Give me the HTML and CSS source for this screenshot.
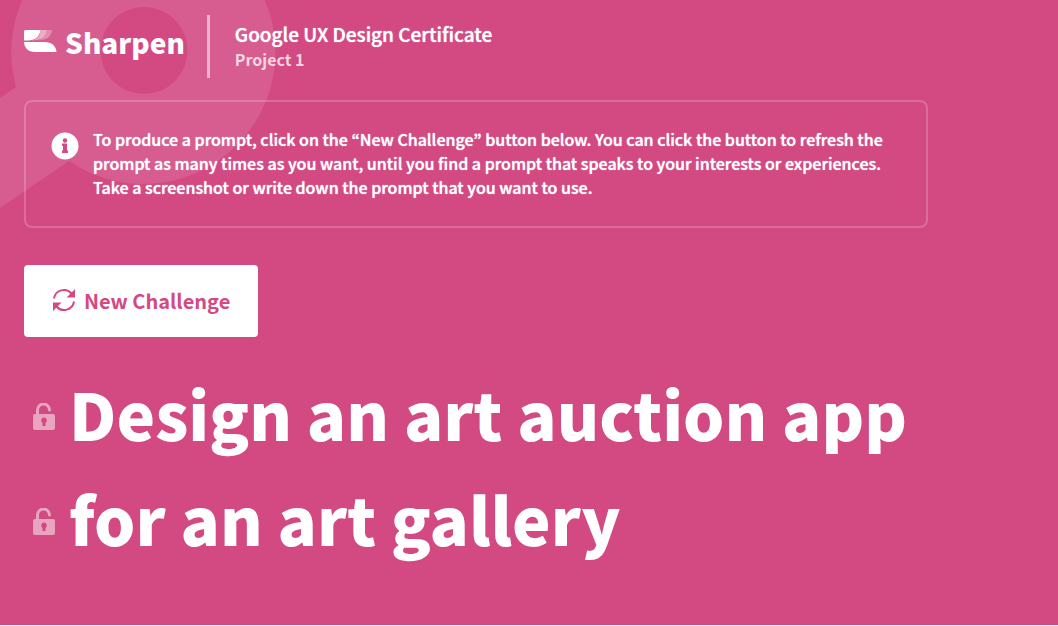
FILE: index.html
```
<!DOCTYPE html>
<html lang="en">
<head>
<meta charset="utf-8">
<meta name="viewport" content="width=device-width, initial-scale=1">
<title>Sharpen</title>
<link rel="stylesheet" href="styles.css">
</head>
<body>
<div class="page">
  <svg class="backdrop" width="280" height="212" viewBox="0 0 280 212" aria-hidden="true">
    <path fill="#fff" fill-rule="evenodd" d="M28 -12A132 132 0 0 0 16 87L0 98V208L69 161A132 132 0 1 0 28 -12ZM144 7a43.500 43.500 0 1 1 0 87a43.500 43.500 0 1 1 0-87Z"/>
  </svg>
  <header class="header">
    <div class="brand">
      <svg width="33" height="23" viewBox="0 0 33 23" fill="#fff" aria-hidden="true">
        <path opacity=".3" d="M12 10.500C20 10 22 5 22.500 0H28C27.500 7 22 10.500 12 10.500Z"/>
        <path opacity=".5" d="M7 10.500C14 10 16.500 5 16.500 0H22.500C22 7 18 10.500 7 10.500Z"/>
        <path d="M0 1.500Q0 0 1.500 0H16.500C15.500 7 11 10.500 4 10.500H0Z"/>
        <path d="M0 12H20C28 12 32 16 32.500 22H11C4 22 .5 18 0 12Z"/>
      </svg>
      <span class="wordmark">Sharpen</span>
    </div>
    <div class="course">
      <h2 class="course-title">Google UX Design Certificate</h2>
      <p class="course-project">Project 1</p>
    </div>
  </header>
  <main>
    <section class="notice">
      <svg class="notice-icon" width="28" height="28" viewBox="0 0 28 28" aria-hidden="true">
        <circle cx="14" cy="14" r="13.500" fill="#fff"/>
        <circle cx="14" cy="8.500" r="2.200" fill="#d34982"/>
        <path fill="#d34982" d="M11 11.500h5v7h1V21h-6v-2.500h1V14h-1Z"/>
      </svg>
      <p class="notice-text">To produce a prompt, click on the “New Challenge” button below. You can click the button to refresh the prompt as many times as you want, until you find a prompt that speaks to your interests or experiences. Take a screenshot or write down the prompt that you want to use.</p>
    </section>
    <button class="challenge" type="button">
      <svg width="24" height="24" viewBox="0 0 24 24" aria-hidden="true">
        <path fill="none" stroke="#d34982" stroke-width="2" d="M2 10.500A10 10 0 0 1 19.500 5.500M22 13.500A10 10 0 0 1 4.500 18.500"/>
        <path fill="#d34982" d="M23 1V9.500H14.500ZM1 23V14.500H9.500Z"/>
      </svg>
      New Challenge
    </button>
    <h1 class="prompt">
      <span class="prompt-line">
        <button class="lock" type="button" aria-label="Lock first line">
          <svg width="22" height="28" viewBox="0 0 22 28" aria-hidden="true">
            <path fill="none" stroke="#fff" stroke-width="3" stroke-linecap="round" d="M4.500 11V7A6 6 0 0 1 16.500 7"/>
            <path fill="#fff" fill-rule="evenodd" d="M2 11H20Q22 11 22 13V25Q22 27 20 27H2Q0 27 0 25V13Q0 11 2 11ZM11 14.500a3 3 0 0 0-1.500 5.500v3h3v-3a3 3 0 0 0-1.500-5.500Z"/>
          </svg>
        </button>
        <span>Design an art auction app</span>
      </span>
      <span class="prompt-line">
        <button class="lock" type="button" aria-label="Lock second line">
          <svg width="22" height="28" viewBox="0 0 22 28" aria-hidden="true">
            <path fill="none" stroke="#fff" stroke-width="3" stroke-linecap="round" d="M4.500 11V7A6 6 0 0 1 16.500 7"/>
            <path fill="#fff" fill-rule="evenodd" d="M2 11H20Q22 11 22 13V25Q22 27 20 27H2Q0 27 0 25V13Q0 11 2 11ZM11 14.500a3 3 0 0 0-1.500 5.500v3h3v-3a3 3 0 0 0-1.500-5.500Z"/>
          </svg>
        </button>
        <span>for an art gallery</span>
      </span>
    </h1>
  </main>
</div>
</body>
</html>
```
FILE: styles.css
```
* {
  box-sizing: border-box;
}

body,
h1,
h2,
p {
  margin: 0;
}

body {
  background: #fff;
  color: #fff;
  font-family: "Source Sans Pro", "Noto Sans CJK KR", sans-serif;
  font-weight: 700;
}

.page {
  position: relative;
  min-height: calc(100vh - 1px);
  padding: 15px 24px 0;
  background: #d34982;
}

.backdrop {
  position: absolute;
  top: 0;
  left: 0;
  opacity: 0.1;
}

.header,
main {
  position: relative;
}

.header {
  display: flex;
  align-items: center;
}

.brand {
  display: flex;
  align-items: center;
  gap: 8px;
  padding: 0 22px 10px 0;
}

.wordmark {
  font-size: 28px;
  font-weight: 900;
  line-height: 40px;
}

.course {
  padding: 5px 0 6px 25px;
  border-left: 3px solid rgba(255, 255, 255, 0.55);
}

.course-title {
  font-size: 19px;
  font-weight: 500;
  line-height: 27px;
  text-shadow: 0 0 1px #fff;
}

.course-project {
  color: rgba(255, 255, 255, 0.75);
  font-size: 16px;
  line-height: 25px;
}

.notice {
  display: flex;
  gap: 14px;
  max-width: 904px;
  margin-top: 22px;
  padding: 25px;
  border: 2px solid rgba(255, 255, 255, 0.2);
  border-radius: 8px;
}

.notice-icon {
  flex: none;
  margin-top: 5px;
}

.notice-text {
  padding-bottom: 2px;
  font-size: 16px;
  font-weight: 500;
  line-height: 24px;
  text-shadow: 0 0 1px #fff;
}

.challenge {
  display: flex;
  align-items: center;
  gap: 8px;
  height: 72px;
  margin-top: 37px;
  padding: 0 28px 2px;
  border: 0;
  border-radius: 4px;
  background: #fff;
  color: #d34982;
  font: inherit;
  font-size: 20px;
}

.prompt {
  margin-top: 24px;
  font-size: 65px;
  font-weight: 900;
  line-height: 105px;
}

.prompt-line {
  display: flex;
  align-items: center;
  gap: 14px;
  padding-left: 9px;
}

.lock {
  display: flex;
  padding: 6px 0 0;
  border: 0;
  background: none;
  opacity: 0.5;
}
```
